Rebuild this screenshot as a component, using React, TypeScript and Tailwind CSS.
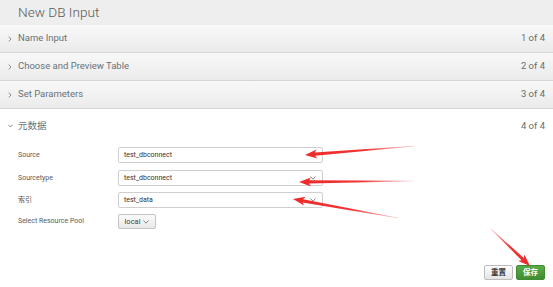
import React from "react";

const FONT = { fontFamily: 'Roboto, "Noto Sans CJK SC", "Liberation Sans", sans-serif' };

type Pt = [number, number];

function arrowPoints(t: Pt, p: Pt, L = 10, wh = 4.5, ws = 1.6, wt = 0.3): string {
  const dx = p[0] - t[0];
  const dy = p[1] - t[1];
  const len = Math.hypot(dx, dy);
  const ux = dx / len;
  const uy = dy / len;
  const nx = -uy;
  const ny = ux;
  const bx = p[0] - ux * L;
  const by = p[1] - uy * L;
  const wx = p[0] - ux * (L + 2);
  const wy = p[1] - uy * (L + 2);
  const pts: Pt[] = [
    [t[0] + nx * wt, t[1] + ny * wt],
    [bx + nx * ws, by + ny * ws],
    [wx + nx * wh, wy + ny * wh],
    [p[0], p[1]],
    [wx - nx * wh, wy - ny * wh],
    [bx - nx * ws, by - ny * ws],
    [t[0] - nx * wt, t[1] - ny * wt],
  ];
  return pts.map((q) => `${q[0].toFixed(1)},${q[1].toFixed(1)}`).join(" ");
}

const arrows: { t: Pt; p: Pt }[] = [
  { t: [415, 146], p: [305, 155] },
  { t: [413, 181], p: [299, 182] },
  { t: [398, 218], p: [293, 199] },
  { t: [491, 229], p: [530, 266] },
];

function Caret({ className = "" }: { className?: string }) {
  return (
    <svg width="6" height="4" viewBox="0 0 6 4" className={className}>
      <path d="M0.5 0.5 L3 3.2 L5.5 0.5" fill="none" stroke="#8a8a8a" strokeWidth="1" />
    </svg>
  );
}

function Row({ title, step, open = false }: { title: string; step: string; open?: boolean }) {
  return (
    <div
      className={
        open
          ? "flex h-[34px] items-center bg-white pr-[8px]"
          : "flex h-[28px] items-center border-b border-[#d6d6d6] bg-gradient-to-b from-[#f8f8f8] to-[#ebebeb] pr-[8px]"
      }
    >
      <div className="flex w-[18px] justify-center pl-[2px]">
        {open ? (
          <svg width="5" height="4" viewBox="0 0 5 4">
            <path d="M0.5 0.8 L2.5 3 L4.5 0.8" fill="none" stroke="#7a8288" strokeWidth="0.9" />
          </svg>
        ) : (
          <svg width="4" height="6" viewBox="0 0 4 6">
            <path d="M0.8 0.6 L3 3 L0.8 5.4" fill="none" stroke="#7a8288" strokeWidth="0.9" />
          </svg>
        )}
      </div>
      <div className="flex-1 text-[9.5px] text-[#67737b]">{title}</div>
      <div className="text-[9.5px] text-[#6b6b6b]">{step}</div>
    </div>
  );
}

function Field({ label, value }: { label: string; value: string }) {
  return (
    <div className="flex h-[16px] items-center">
      <div className="w-[118px] shrink-0 pl-[18px] text-[7px] text-[#5a5a5a]">{label}</div>
      <div className="flex h-[16px] w-[205px] items-center rounded-[2px] border border-[#cfcfcf] bg-white pl-[5px] pr-[6px]">
        <span className="flex-1 text-[7px] text-[#333]">{value}</span>
        <Caret />
      </div>
    </div>
  );
}

export default function App() {
  return (
    <div className="relative h-[287px] w-[553px] overflow-hidden bg-white" style={FONT}>
      <div className="flex h-[25px] items-center bg-[#eeeeee] pl-[18px] text-[13.6px] font-light text-[#5a5a5a]">
        New DB Input
      </div>
      <Row title="Name Input" step="1 of 4" />
      <Row title="Choose and Preview Table" step="2 of 4" />
      <Row title="Set Parameters" step="3 of 4" />
      <Row title="元数据" step="4 of 4" open />

      <div className="mt-[4px] flex flex-col">
        <Field label="Source" value="test_dbconnect" />
        <div className="mt-[7px]">
          <Field label="Sourcetype" value="test_dbconnect" />
        </div>
        <div className="mt-[6px]">
          <Field label="索引" value="test_data" />
        </div>
        <div className="mt-[6px] flex h-[15px] items-center">
          <div className="w-[118px] shrink-0 pl-[18px] text-[7px] text-[#5a5a5a]">Select Resource Pool</div>
          <div className="flex h-[15px] w-[38px] items-center justify-center gap-[3px] rounded-[2px] border border-[#c4c4c4] bg-gradient-to-b from-[#fbfbfb] to-[#e9e9e9] text-[7.5px] text-[#444]">
            <span>local</span>
            <Caret />
          </div>
        </div>
      </div>

      <div className="mt-[36px] flex justify-end gap-[3px] pr-[8px]">
        <div className="flex h-[15px] w-[29px] items-center justify-center rounded-[2px] border border-[#bdbdbd] bg-gradient-to-b from-[#ffffff] to-[#e4e4e4] text-[7.5px] font-bold text-[#333]">
          重置
        </div>
        <div className="flex h-[15px] w-[29px] items-center justify-center rounded-[2px] border border-[#3f8a32] bg-gradient-to-b from-[#5aab48] to-[#3f8d33] text-[7.5px] font-bold text-white">
          保存
        </div>
      </div>

      <svg className="pointer-events-none absolute left-0 top-0" width="553" height="287">
        <defs>
          {arrows.map((a, i) => (
            <linearGradient
              key={i}
              id={`ag${i}`}
              gradientUnits="userSpaceOnUse"
              x1={a.t[0]}
              y1={a.t[1]}
              x2={a.p[0]}
              y2={a.p[1]}
            >
              <stop offset="0" stopColor="#f47070" stopOpacity="0.4" />
              <stop offset="0.45" stopColor="#f03535" stopOpacity="1" />
              <stop offset="1" stopColor="#ee2a2a" stopOpacity="1" />
            </linearGradient>
          ))}
        </defs>
        {arrows.map((a, i) => (
          <polygon key={i} points={arrowPoints(a.t, a.p)} fill={`url(#ag${i})`} />
        ))}
      </svg>
    </div>
  );
}
